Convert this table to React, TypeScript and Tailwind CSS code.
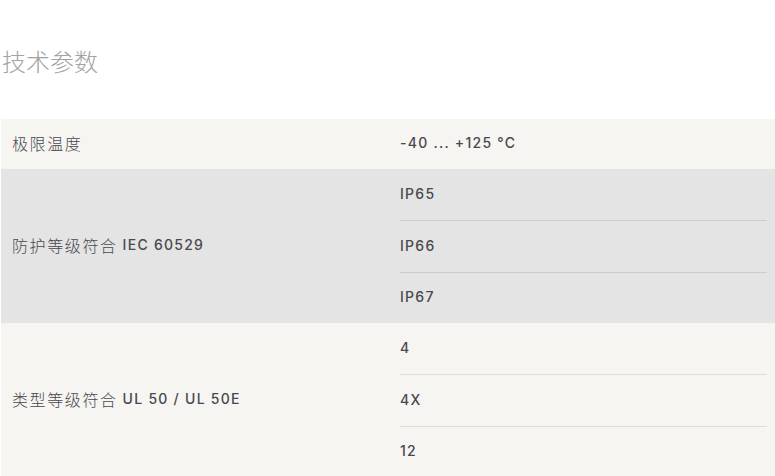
const rows = [
  { label: "极限温度", latin: "", values: ["-40 ... +125 °C"], bg: "bg-[#f6f5f2]" },
  { label: "防护等级符合", latin: "IEC 60529", values: ["IP65", "IP66", "IP67"], bg: "bg-[#e4e4e4]" },
  { label: "类型等级符合", latin: "UL 50 / UL 50E", values: ["4", "4X", "12"], bg: "bg-[#f6f5f2]" },
];

const App = () => {
  return (
    <div className="w-full min-h-screen bg-white text-[#48484e] font-['Inter','Noto_Sans_CJK_SC',sans-serif]">
      <h1 className="pt-[45px] pl-[2px] h-[119px] text-[24px] leading-[32px] font-light text-[#a3a3a3] font-['Noto_Sans_CJK_SC',sans-serif]">
        技术参数
      </h1>

      <div className="ml-[1px]">
        {rows.map((row, i) => (
          <div key={i} className={`flex ${row.bg}`}>
            <div className="w-[399px] pl-[11px] pb-[3px] flex items-center">
              <span className="text-[16px] font-light tracking-[0.1em] font-['Noto_Sans_CJK_SC',sans-serif]">{row.label}</span>
              {row.latin && (
                <span className="ml-[5px] text-[14px] font-medium tracking-[0.09em]">{row.latin}</span>
              )}
            </div>
            <div className="flex-1 pr-[8px]">
              {row.values.map((v, j) => {
                const last = j === row.values.length - 1;
                let h = "h-[51px]";
                if (i === 0) h = "h-[50px]";
                else if (j > 0 && !last) h = "h-[52px] border-t border-black/10";
                else if (j > 0) h = "h-[51px] border-t border-black/10";
                return (
                  <div key={j} className={`flex items-center pb-[3px] text-[14px] font-medium tracking-[0.09em] ${h}`}>
                    {v}
                  </div>
                );
              })}
            </div>
          </div>
        ))}
      </div>
    </div>
  );
};

export default App;
